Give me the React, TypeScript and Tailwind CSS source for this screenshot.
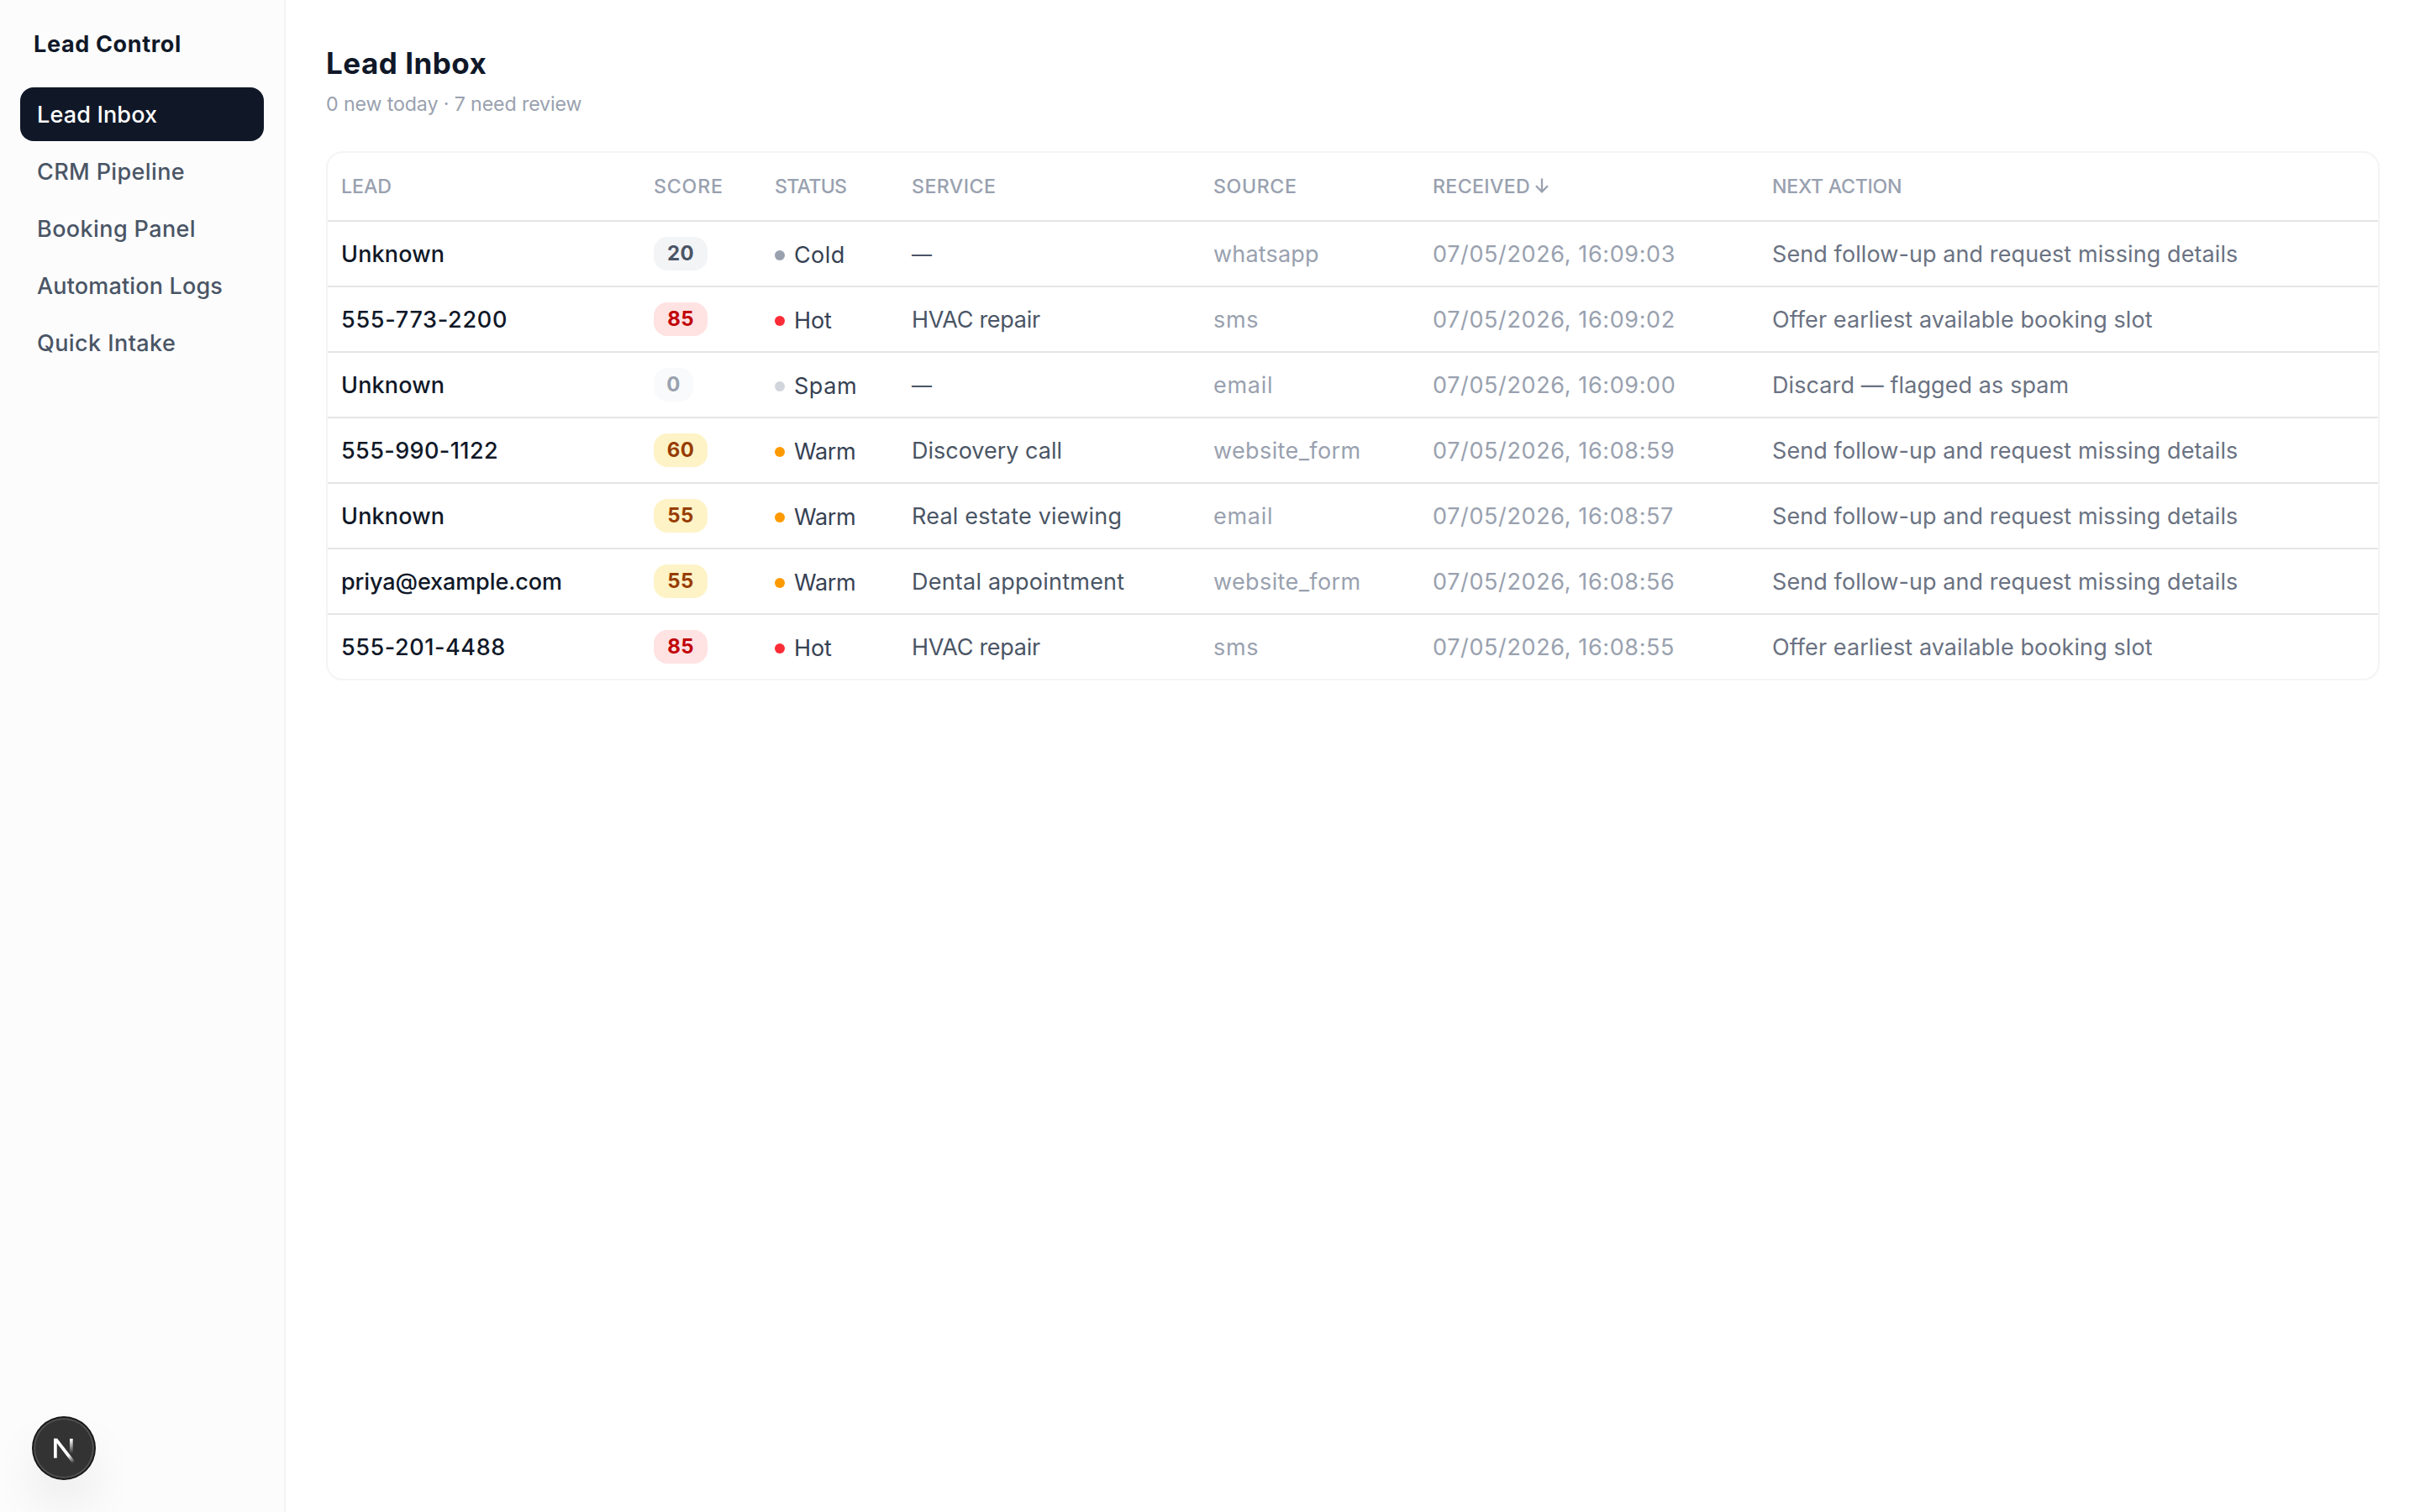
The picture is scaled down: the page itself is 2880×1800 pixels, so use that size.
type Status = "Cold" | "Hot" | "Spam" | "Warm";

interface Lead {
  name: string;
  nameTracking: string;
  score: number;
  status: Status;
  service: string;
  source: string;
  received: string;
  next: string;
}

const FOLLOW_UP = "Send follow-up and request missing details";
const OFFER_SLOT = "Offer earliest available booking slot";
const DISCARD = "Discard — flagged as spam";

const LEADS: Lead[] = [
  { name: "Unknown", nameTracking: "tracking-[0.15px]", score: 20, status: "Cold", service: "—", source: "whatsapp", received: "07/05/2026, 16:09:03", next: FOLLOW_UP },
  { name: "555-773-2200", nameTracking: "tracking-[0.71px]", score: 85, status: "Hot", service: "HVAC repair", source: "sms", received: "07/05/2026, 16:09:02", next: OFFER_SLOT },
  { name: "Unknown", nameTracking: "tracking-[0.15px]", score: 0, status: "Spam", service: "—", source: "email", received: "07/05/2026, 16:09:00", next: DISCARD },
  { name: "555-990-1122", nameTracking: "tracking-[0.4px]", score: 60, status: "Warm", service: "Discovery call", source: "website_form", received: "07/05/2026, 16:08:59", next: FOLLOW_UP },
  { name: "Unknown", nameTracking: "tracking-[0.15px]", score: 55, status: "Warm", service: "Real estate viewing", source: "email", received: "07/05/2026, 16:08:57", next: FOLLOW_UP },
  { name: "priya@example.com", nameTracking: "tracking-[-0.1px]", score: 55, status: "Warm", service: "Dental appointment", source: "website_form", received: "07/05/2026, 16:08:56", next: FOLLOW_UP },
  { name: "555-201-4488", nameTracking: "tracking-[0.57px]", score: 85, status: "Hot", service: "HVAC repair", source: "sms", received: "07/05/2026, 16:08:55", next: OFFER_SLOT },
];

const NAV = [
  { label: "Lead Inbox", tracking: "tracking-[0.16px]" },
  { label: "CRM Pipeline", tracking: "tracking-[0.38px]" },
  { label: "Booking Panel", tracking: "tracking-[0.4px]" },
  { label: "Automation Logs", tracking: "tracking-[0.17px]" },
  { label: "Quick Intake", tracking: "tracking-[0.42px]" },
];

const COLUMNS = [
  { label: "LEAD", width: "w-[372px]", tracking: "tracking-[-0.06px]" },
  { label: "SCORE", width: "w-[144px]", tracking: "tracking-[0.8px]" },
  { label: "STATUS", width: "w-[163px]", tracking: "tracking-[-0.75px]" },
  { label: "SERVICE", width: "w-[359px]", tracking: "tracking-[0.43px]" },
  { label: "SOURCE", width: "w-[261px]", tracking: "tracking-[0.6px]" },
  { label: "RECEIVED", width: "w-[404px]", tracking: "tracking-[0.34px]" },
  { label: "NEXT ACTION", width: "", tracking: "tracking-[-0.3px]" },
];

const DOT: Record<Status, string> = {
  Cold: "bg-gray-400",
  Hot: "bg-red-500",
  Spam: "bg-gray-300",
  Warm: "bg-amber-500",
};

const STATUS_TRACKING: Record<Status, string> = {
  Cold: "tracking-[0.4px]",
  Hot: "tracking-[-0.1px]",
  Spam: "tracking-[0.55px]",
  Warm: "tracking-[-0.3px]",
};

const BADGE: Record<Status, string> = {
  Cold: "w-16 bg-gray-100 text-gray-600",
  Hot: "w-16 bg-red-100 text-red-700",
  Spam: "w-[47px] bg-gray-50 text-gray-400",
  Warm: "w-16 bg-amber-100 text-amber-800",
};

const SERVICE_TRACKING: Record<string, string> = {
  "—": "text-[24px]",
  "HVAC repair": "tracking-[-0.29px]",
  "Real estate viewing": "tracking-[0.2px]",
  "Dental appointment": "tracking-[0.22px]",
};

const SOURCE_TRACKING: Record<string, string> = {
  whatsapp: "tracking-[0.17px]",
  sms: "tracking-[0.7px]",
  email: "tracking-[0.7px]",
  website_form: "tracking-[0.38px]",
};

function SortArrow() {
  return (
    <svg className="ml-1.5 inline-block h-[18px] w-4 align-[0px]" viewBox="0 0 16 18" fill="none" stroke="currentColor" strokeWidth="2.3">
      <path d="M8 0.5V16M1 9.3L8 16.3L15 9.3" />
    </svg>
  );
}

function DevBadge() {
  return (
    <div className="fixed bottom-10 left-10 h-[72px] w-[72px] rounded-full bg-[#333333] shadow-[0_0_0_2px_#171717,inset_0_0_0_2px_rgba(255,255,255,0.14),0_32px_64px_-16px_rgba(0,0,0,0.24)]">
      <svg className="h-[72px] w-[72px]" viewBox="0 0 36 36" fill="none">
        <defs>
          <linearGradient id="diagonal" x1="9.95" y1="11.12" x2="15.55" y2="18.07" gradientUnits="userSpaceOnUse">
            <stop stopColor="white" />
            <stop offset="0.604" stopColor="white" stopOpacity="0" />
          </linearGradient>
          <linearGradient id="stem" x1="11.82" y1="1.5" x2="11.8" y2="9.9" gradientUnits="userSpaceOnUse">
            <stop stopColor="white" />
            <stop offset="1" stopColor="white" stopOpacity="0" />
          </linearGradient>
          <clipPath id="cap">
            <rect x="0" y="1" width="18" height="16" />
          </clipPath>
        </defs>
        <g transform="translate(10.6 11.3)" clipPath="url(#cap)" strokeWidth="1.86">
          <path d="M13.3 15.2L2.34 1V12.6" stroke="url(#diagonal)" />
          <path d="M11.825 1V13.1" stroke="url(#stem)" />
        </g>
      </svg>
    </div>
  );
}

export default function App() {
  return (
    <div className="flex h-screen bg-white font-['Inter',sans-serif] text-[27px] leading-10 text-gray-900">
      <aside className="w-[340px] shrink-0 border-r-2 border-gray-100 bg-gray-50/50 px-6 pt-[33px]">
        <div className="mb-[31px] pl-4 font-bold tracking-[0.65px]">Lead Control</div>
        <nav className="flex flex-col gap-1">
          {NAV.map((item, i) => (
            <a
              key={item.label}
              className={`block rounded-2xl px-5 pt-[13px] pb-[11px] font-medium ${item.tracking} ${i === 0 ? "bg-gray-900 text-white" : "text-gray-600"}`}
            >
              {item.label}
            </a>
          ))}
        </nav>
      </aside>

      <main className="min-w-0 flex-1 p-12">
        <h1 className="text-[35px] leading-[54px] font-bold tracking-[0.5px]">Lead Inbox</h1>
        <p className="mt-1.5 text-[23.2px] leading-8 tracking-[-0.12px] text-gray-400">0 new today · 7 need review</p>

        <div className="mt-10 overflow-hidden rounded-[20px] border-2 border-gray-100">
          <table className="w-full table-fixed border-separate border-spacing-0 text-left whitespace-nowrap">
            <thead>
              <tr className="h-[82px]">
                {COLUMNS.map((c) => (
                  <th
                    key={c.label}
                    className={`border-b-2 border-[#e5e5e5] px-4 py-0 text-[23.2px] leading-8 font-medium text-gray-400 ${c.width} ${c.tracking}`}
                  >
                    {c.label}
                    {c.label === "RECEIVED" && <SortArrow />}
                  </th>
                ))}
              </tr>
            </thead>
            <tbody className="[&>tr:last-child]:h-[76px] [&>tr:last-child>td]:border-b-0">
              {LEADS.map((l) => (
                <tr key={l.received} className="h-[78px] [&>td]:border-b-2 [&>td]:border-[#e5e5e5] [&>td]:px-4 [&>td]:pt-0.5 [&>td]:pb-0">
                  <td className={`font-medium ${l.nameTracking}`}>{l.name}</td>
                  <td>
                    <span className={`-mt-0.5 flex h-10 items-center justify-center rounded-2xl text-2xl font-bold tracking-[0.3px] ${BADGE[l.status]}`}>
                      {l.score}
                    </span>
                  </td>
                  <td>
                    <span className={`flex items-center gap-[11px] pt-0.5 text-gray-700 ${STATUS_TRACKING[l.status]}`}>
                      <span className={`h-3 w-3 shrink-0 rounded-full ${DOT[l.status]}`} />
                      {l.status}
                    </span>
                  </td>
                  <td className={`text-gray-600 ${SERVICE_TRACKING[l.service] ?? ""}`}>{l.service}</td>
                  <td className={`text-gray-400 ${SOURCE_TRACKING[l.source]}`}>{l.source}</td>
                  <td className="tracking-[0.62px] text-gray-400">{l.received}</td>
                  <td className="tracking-[0.09px] text-gray-500">{l.next}</td>
                </tr>
              ))}
            </tbody>
          </table>
        </div>
      </main>

      <DevBadge />
    </div>
  );
}
